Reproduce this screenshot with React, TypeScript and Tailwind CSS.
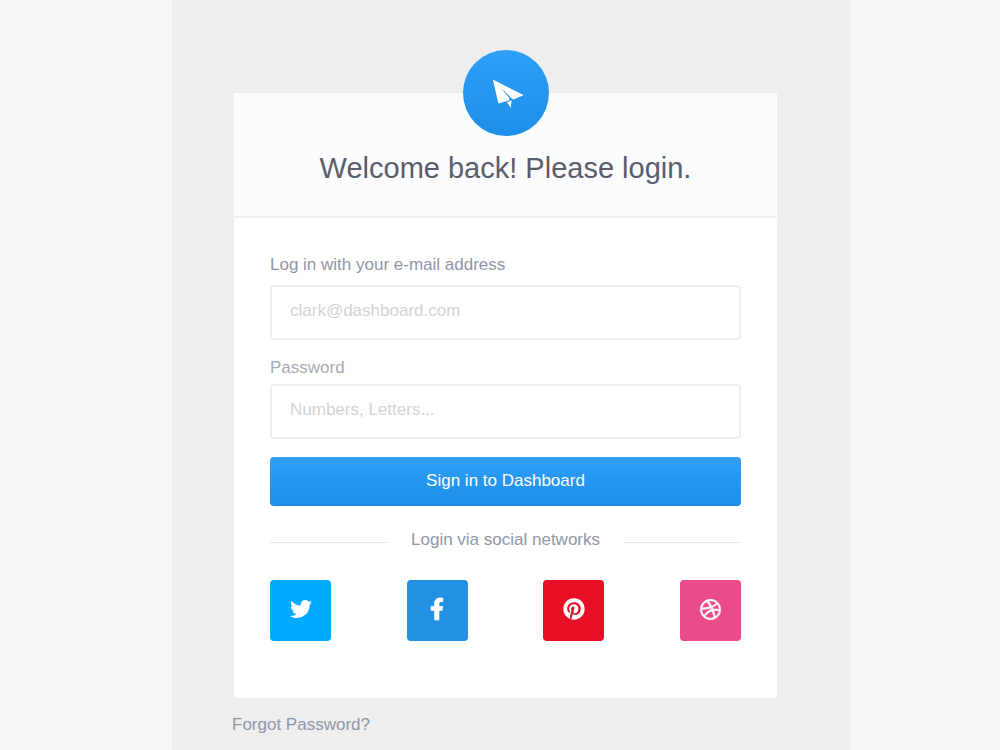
import type { ReactNode } from "react";
import { FaDribbble, FaFacebookF, FaPinterest, FaTwitter } from "react-icons/fa";

function PaperPlane() {
  return (
    <svg viewBox="0 0 32 30" className="h-[30px] w-8" fill="#fff" aria-hidden="true">
      <path d="M1.8 1.4 32.8 17.2 22.2 21.4 19.4 19.2 9.8 9.8 18.4 20.2 18.6 22.2 7.4 25.6Z" />
      <path d="M16 24.2 20.6 22.6 19.8 30Z" />
    </svg>
  );
}

type FieldProps = { id: string; type: string; placeholder: string };

function Field({ id, type, placeholder }: FieldProps) {
  return (
    <input
      id={id}
      type={type}
      placeholder={placeholder}
      className="block h-[55px] w-full rounded border-2 border-[#eceef2] bg-white px-[18px] pb-1 text-[17px] text-[#596174] placeholder:text-[#d2d4d7]"
    />
  );
}

type SocialProps = { label: string; color: string; children: ReactNode };

function Social({ label, color, children }: SocialProps) {
  return (
    <a
      href="#"
      aria-label={label}
      className={`flex size-[61px] items-center justify-center rounded pb-[3px] text-white ${color}`}
    >
      {children}
    </a>
  );
}

export default function App() {
  return (
    <main className="min-h-screen bg-[#f5f7f7] pr-[150px] pl-[172px] font-['Liberation_Sans',Arial,sans-serif]">
      <div className="min-h-screen bg-[#eeeeee] pt-[93px] pr-[73px] pl-[62px]">
        <form className="rounded bg-white pb-[57px]" onSubmit={(e) => e.preventDefault()}>
          <header className="relative border-b-2 border-[#eef0f1] bg-[#fbfcfe] pt-[55px] pb-7 text-center">
            <div className="absolute -top-[43px] left-1/2 flex size-[86px] -translate-x-1/2 items-center justify-center rounded-full bg-linear-to-b from-[#2f9ff7] to-[#1b8fea] pl-[2px]">
              <PaperPlane />
            </div>
            <h1 className="text-[29px] leading-10 text-[#5a5c6c]">Welcome back! Please login.</h1>
          </header>

          <div className="px-9 pt-[35px]">
            <label htmlFor="email" className="mb-2 block text-[17px] leading-6 text-[#8f97a6]">
              Log in with your e-mail address
            </label>
            <Field id="email" type="email" placeholder="clark@dashboard.com" />

            <label htmlFor="password" className="mt-4 mb-1 block text-[17px] leading-6 text-[#a9abb1]">
              Password
            </label>
            <Field id="password" type="password" placeholder="Numbers, Letters..." />

            <button
              type="submit"
              className="mt-[18px] block h-[49px] w-full rounded bg-linear-to-b from-[#2f9ff7] to-[#1b8fea] pb-[2px] text-[17px] text-white"
            >
              Sign in to Dashboard
            </button>

            <div className="mt-[22px] flex items-center gap-6">
              <span className="mt-1 h-px flex-1 bg-[#e2e4ea]" />
              <p className="text-[17px] leading-6 text-[#8f97a6]">Login via social networks</p>
              <span className="mt-1 h-px flex-1 bg-[#e2e4ea]" />
            </div>

            <div className="mt-7 flex justify-between">
              <Social label="Twitter" color="bg-[#00aaff]">
                <FaTwitter size={22} />
              </Social>
              <Social label="Facebook" color="bg-[#2490e3]">
                <FaFacebookF size={22} stroke="currentColor" strokeWidth={18} className="overflow-visible" />
              </Social>
              <Social label="Pinterest" color="bg-[#e60f26]">
                <FaPinterest size={22} />
              </Social>
              <Social label="Dribbble" color="bg-[#ea4c89]">
                <FaDribbble size={21} stroke="currentColor" strokeWidth={16} className="overflow-visible" />
              </Social>
            </div>
          </div>
        </form>
        <a href="#" className="mt-[15px] -ml-[2px] inline-block text-[17px] leading-6 text-[#8f97a6]">
          Forgot Password?
        </a>
      </div>
    </main>
  );
}
